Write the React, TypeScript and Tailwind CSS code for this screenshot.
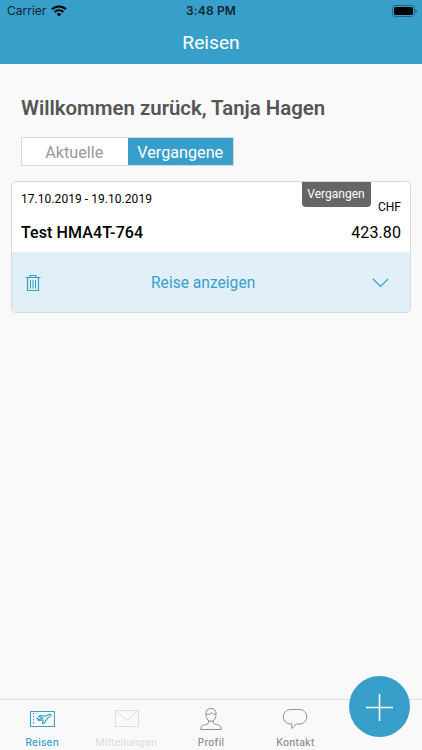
import type { ReactNode } from 'react';

interface Trip {
  dates: string;
  title: string;
  currency: string;
  amount: string;
  status: string;
}

interface NavItem {
  label: string;
  color: string;
  icon: ReactNode;
}

const TRIPS: Trip[] = [
  {
    dates: '17.10.2019 - 19.10.2019',
    title: 'Test HMA4T-764',
    currency: 'CHF',
    amount: '423.80',
    status: 'Vergangen',
  },
];

function TicketIcon() {
  return (
    <svg width="26" height="24" viewBox="0 0 26 24" fill="none" stroke="currentColor" strokeWidth="1.1">
      <rect x="1.5" y="4.5" width="24" height="15" rx="0.5" />
      <path d="M4.500 6v12" strokeDasharray="1.500 1.500" />
      <path d="M7.700 11l2.300 2.700 4.300-1-.8 3.800 1.700-.4 3.400-5 2.600-1.700c1.200-.9 1.200-2.200-.5-2-.9.100-1.800.5-2.700 1l-1.700.9-5.300-.9-1.300 1 4 1.700-3.200 1.500z" strokeLinejoin="round" />
    </svg>
  );
}

function MailIcon() {
  return (
    <svg width="26" height="24" viewBox="0 0 26 24" fill="none" stroke="currentColor" strokeWidth="1">
      <rect x="1.5" y="3.5" width="23" height="16" />
      <path d="M1.5 3.5L13 13.5 24.5 3.5" />
    </svg>
  );
}

function ProfileIcon() {
  return (
    <svg width="26" height="24" viewBox="0 0 26 24" fill="none" stroke="currentColor" strokeWidth="1">
      <path d="M13 1.500c-3.300 0-5.100 2.200-5.100 5.300 0 4.200 2 7.500 5.100 7.500s5.100-3.300 5.100-7.500c0-3.100-1.800-5.300-5.100-5.300z" />
      <path d="M8 7.500c2.400 0 4.600-.3 5.800-1.800 1 1.200 2.400 1.800 4.200 1.800" />
      <path d="M10.700 13.500v2.300c-.2 1.300-3 1.500-5.200 2.300-2 .7-2.800 2.400-2.800 4.400h20.600c0-2-.8-3.700-2.800-4.400-2.200-.8-5-1-5.200-2.300v-2.300" />
    </svg>
  );
}

function ChatIcon() {
  return (
    <svg width="26" height="24" viewBox="0 0 26 24" fill="none" stroke="currentColor" strokeWidth="1">
      <path d="M9 2.500h8c4.600 0 7.700 3 7.700 7.200 0 4.300-3.100 7.300-7.700 7.300h-2.700L9.800 21.500V17H9c-4.600 0-7.700-3-7.700-7.300C1.300 5.500 4.400 2.500 9 2.500z" />
    </svg>
  );
}

function TrashIcon() {
  return (
    <svg width="16" height="18" viewBox="0 0 16 18" fill="none" stroke="currentColor" strokeWidth="1">
      <path d="M.5 3.500h15M5 3.500V1.500h6v2M2.500 3.500v13h11v-13" strokeWidth="1.200" />
      <path d="M5.500 6v8.500M8 6v8.500M10.500 6v8.500" />
    </svg>
  );
}

const NAV_ITEMS: NavItem[] = [
  { label: 'Reisen', color: 'text-[#389fcb]', icon: <TicketIcon /> },
  { label: 'Mitteilungen', color: 'text-[#dedede]', icon: <MailIcon /> },
  { label: 'Profil', color: 'text-[#8e8e8e]', icon: <ProfileIcon /> },
  { label: 'Kontakt', color: 'text-[#8e8e8e]', icon: <ChatIcon /> },
];

function StatusBar() {
  return (
    <div className="grid h-[22px] grid-cols-3 items-center px-[7px] font-['Inter',sans-serif] text-[12px] text-[#10242e]">
      <div className="flex items-center gap-[5px]">
        <span>Carrier</span>
        <svg width="16" height="12" viewBox="0 0 16 12" fill="none" stroke="#000" strokeWidth="2.1">
          <path d="M1 4.300a10 10 0 0 1 14 0M3.600 7.100a6.300 6.300 0 0 1 8.800 0" />
          <path d="M8 11.500L5.700 9.200a3.300 3.300 0 0 1 4.600 0z" fill="#000" stroke="none" />
        </svg>
      </div>
      <span className="text-center font-semibold tracking-[0.15px]">3:48 PM</span>
      <svg className="-mr-0.5 justify-self-end" width="25" height="12" viewBox="0 0 25 12">
        <rect x="0.500" y="0.500" width="22" height="11" rx="3" fill="none" stroke="#226580" />
        <rect x="2" y="2" width="19" height="8" rx="1.700" fill="#000" />
        <path d="M23.500 4v4c.9-.4 1.200-1 1.200-2s-.3-1.600-1.200-2z" fill="#226580" />
      </svg>
    </div>
  );
}

function TripCard({ trip }: { trip: Trip }) {
  return (
    <article className="relative mx-[11px] mt-[15px] h-[132px] overflow-hidden rounded-[5px] border border-[#d7dadc] bg-white">
      <div className="flex h-[70px] justify-between px-[9px] text-black">
        <div>
          <p className="mt-[9px] text-[12px] leading-4 tracking-[0.05px]">{trip.dates}</p>
          <h2 className="mt-[16px] text-[16px] leading-5 font-medium tracking-[0.1px]">{trip.title}</h2>
        </div>
        <div className="text-right">
          <p className="mt-[17px] text-[12px] leading-4">{trip.currency}</p>
          <p className="mt-[8px] text-[16px] leading-5 tracking-[0.1px]">{trip.amount}</p>
        </div>
      </div>
      <span className="absolute top-0 right-[39px] h-[25px] w-[69px] rounded-b-[4px] bg-[#666] pr-px text-center text-[12px] leading-[25px] text-white">
        {trip.status}
      </span>
      <button className="flex h-[61px] w-full items-center bg-[#e1eff9] pr-[21px] pl-[13px] text-[15.600px] text-[#389fcb]">
        <TrashIcon />
        <span className="ml-[110px] pt-[3px] whitespace-nowrap">Reise anzeigen</span>
        <svg className="ml-auto" width="17" height="10" viewBox="0 0 17 10" fill="none" stroke="currentColor" strokeWidth="1.200">
          <path d="M1 1l7.500 7.500L16 1" />
        </svg>
      </button>
    </article>
  );
}

export default function App() {
  return (
    <div className="flex h-[750px] w-[422px] flex-col overflow-hidden bg-[#f9f9f9] font-['Roboto',sans-serif]">
      <header className="h-16 shrink-0 bg-[#389fcb]">
        <StatusBar />
        <h1 className="text-center text-[19.200px] leading-[42px] text-white">Reisen</h1>
      </header>

      <main className="flex-1">
        <h2 className="mt-[32px] ml-[21px] text-[20.400px] leading-6 font-semibold text-[#555]">
          Willkommen zurück, Tanja Hagen
        </h2>
        <div className="mt-[17px] ml-[21px] grid h-[29px] w-[213px] grid-cols-2 border border-[#d3dade] text-[16.200px]">
          <button className="bg-white pt-[3px] pr-px text-[#999]">Aktuelle</button>
          <button className="bg-[#389fcb] pt-[3px] text-white">Vergangene</button>
        </div>
        {TRIPS.map((trip) => (
          <TripCard key={trip.title} trip={trip} />
        ))}
      </main>

      <nav className="relative grid h-[51px] shrink-0 grid-cols-5 border-t border-[#dcdddc] bg-[#f9f9f9]">
        {NAV_ITEMS.map((item) => (
          <button
            key={item.label}
            className={`flex flex-col items-center pt-[7px] font-['Inter',sans-serif] text-[10px] leading-[22px] font-medium tracking-[0.25px] ${item.color}`}
          >
            {item.icon}
            <span>{item.label}</span>
          </button>
        ))}
        <button className="absolute -top-[24px] right-[12px] flex size-[61px] items-center justify-center rounded-full bg-[#389fcb] text-white">
          <svg className="mt-px" width="27" height="27" viewBox="0 0 27 27" fill="none" stroke="currentColor" strokeWidth="1.500">
            <path d="M13.500 0v27M0 13.500h27" />
          </svg>
        </button>
      </nav>
    </div>
  );
}
